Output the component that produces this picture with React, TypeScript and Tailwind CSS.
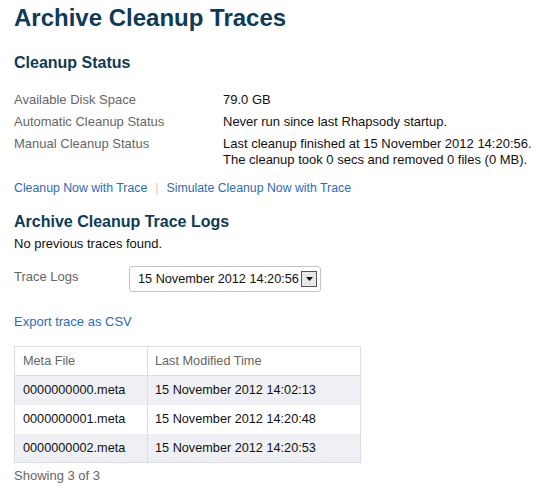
const statusRows = [
  { label: 'Available Disk Space', value: ['79.0 GB'] },
  { label: 'Automatic Cleanup Status', value: ['Never run since last Rhapsody startup.'] },
  {
    label: 'Manual Cleanup Status',
    value: [
      'Last cleanup finished at 15 November 2012 14:20:56.',
      'The cleanup took 0 secs and removed 0 files (0 MB).',
    ],
  },
]

const traces = [
  { file: '0000000000.meta', time: '15 November 2012 14:02:13' },
  { file: '0000000001.meta', time: '15 November 2012 14:20:48' },
  { file: '0000000002.meta', time: '15 November 2012 14:20:53' },
]

export default function App() {
  return (
    <div className="min-h-screen bg-white px-[14px] pt-[2px] font-['Liberation_Sans',Arial,sans-serif] text-[13px] leading-4 text-[#111]">
      <h1 className="text-[24px] font-bold leading-8 text-[#0d3b58]">Archive Cleanup Traces</h1>

      <h2 className="mt-[19px] text-[16px] font-bold leading-5 text-[#0d3b58]">Cleanup Status</h2>

      {/* status table */}
      <div className="mt-[19px] grid grid-cols-[209px_1fr] gap-y-[6px]">
        {statusRows.map((row) => (
          <div key={row.label} className="contents">
            <div className="text-[#666]">{row.label}</div>
            <div>
              {row.value.map((v) => (
                <div key={v}>{v}</div>
              ))}
            </div>
          </div>
        ))}
      </div>

      <div className="mt-[12px] flex items-center text-[12.3px] text-[#2c6cb8]">
        <a href="#">Cleanup Now with Trace</a>
        <span className="mx-[8px] text-[#c8c8c8]">|</span>
        <a href="#">Simulate Cleanup Now with Trace</a>
      </div>

      <h2 className="mt-[16px] text-[16px] font-bold leading-5 text-[#0d3b58]">Archive Cleanup Trace Logs</h2>
      <p className="mt-[4px]">No previous traces found.</p>

      <div className="mt-[14px] flex items-start">
        <span className="w-[115px] pt-[3px] text-[#666]">Trace Logs</span>
        <div className="flex h-[26px] w-[192px] items-center justify-between whitespace-nowrap rounded-[3px] border border-[#c4c4c4] bg-white pl-[8px] pr-[3px] text-[12.7px]">
          <span>15 November 2012 14:20:56</span>
          <span className="flex h-[16px] w-[16px] items-center justify-center border border-[#555] bg-[#e8e8e8]">
            <svg width="7" height="4" viewBox="0 0 7 4">
              <path d="M0 0h7L3.5 4z" fill="#111" />
            </svg>
          </span>
        </div>
      </div>

      <a href="#" className="mt-[22px] block text-[#2c6cb8]">
        Export trace as CSV
      </a>

      <table className="mt-[16px] w-[347px] border-collapse border border-[#dadde2] text-[12.7px]">
        <thead>
          <tr className="h-[29px] border-b border-[#dadde2] text-left">
            <th className="w-[133px] border-r border-[#dadde2] pl-[8px] font-normal text-[#666]">Meta File</th>
            <th className="pl-[7px] font-normal text-[#666]">Last Modified Time</th>
          </tr>
        </thead>
        <tbody>
          {traces.map((t, i) => (
            <tr key={t.file} className={i % 2 === 0 ? 'h-[29px] bg-[#eff0f4]' : 'h-[29px] bg-white'}>
              <td className="border-r border-[#dadde2] pl-[8px]">{t.file}</td>
              <td className="pl-[7px]">{t.time}</td>
            </tr>
          ))}
        </tbody>
      </table>

      <p className="mt-[5px] text-[#666]">Showing 3 of 3</p>
    </div>
  )
}
